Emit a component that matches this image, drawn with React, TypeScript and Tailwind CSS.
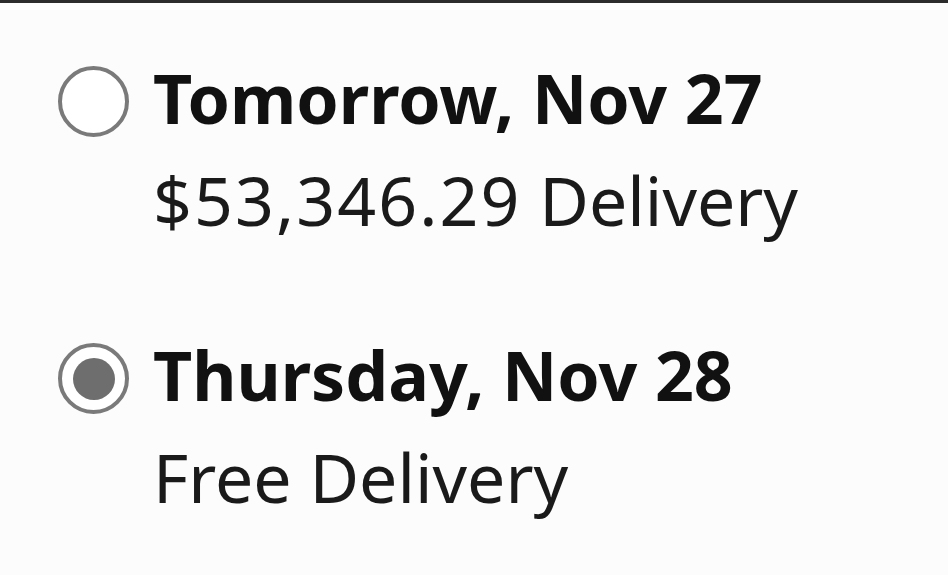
const options = [
  { id: "tomorrow", date: "Tomorrow, Nov 27", amount: "$53,346.29", selected: false },
  { id: "thursday", date: "Thursday, Nov 28", amount: "Free", selected: true },
];

function Radio({ checked }: { checked: boolean }) {
  return (
    <span className="mt-[19px] flex h-[71px] w-[71px] shrink-0 items-center justify-center rounded-full border-[4px] border-[#7a7a7a] bg-white">
      {checked && <span className="h-[42px] w-[42px] rounded-full bg-[#6e6e6e]" />}
    </span>
  );
}

export default function App() {
  return (
    <main
      className="min-h-screen w-[948px] h-[575px] overflow-hidden bg-[#fdfcfd] text-[#111]"
      style={{ fontFamily: '"Noto Sans", "Open Sans", sans-serif' }}
    >
      <div className="h-[3px] bg-[#2b2b2b]" />
      <div className="flex flex-col gap-[73px] pl-[58px] pt-[44px]">
        {options.map((o) => (
          <label key={o.id} className="flex items-start gap-[24px]">
            <Radio checked={o.selected} />
            <div className="flex flex-col text-[68px] leading-[102px]">
              <span className="font-bold">{o.date}</span>
              <span className="font-normal text-[#1a1a1a]">
                {o.amount === "Free" ? (
                  "Free Delivery"
                ) : (
                  <>
                    <span className="tracking-[2.1px]">{o.amount}</span> Delivery
                  </>
                )}
              </span>
            </div>
          </label>
        ))}
      </div>
    </main>
  );
}
